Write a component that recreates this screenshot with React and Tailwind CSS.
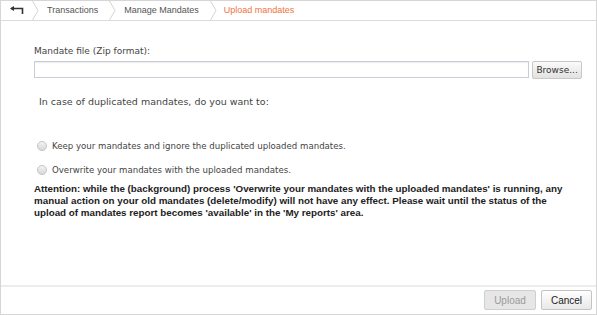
export default function App() {
	const crumbs = ['Transactions', 'Manage Mandates']
	return (
		<div className="w-[597px] h-[315px] bg-white border border-[#d6d6d6] flex flex-col text-[#333]">
			<header className="h-[20px] border-b border-[#dcdcdc] flex items-stretch font-['Liberation_Sans',Arial,sans-serif] text-[9px]">
				<div className="w-[31px] flex items-center justify-center">
					<svg width="14" height="9" viewBox="0 0 14 9" className="ml-[1px]">
						<path d="M1 2.5 H12.5 V8" fill="none" stroke="#333" strokeWidth="1.6" />
						<path d="M0 2.5 L4 0 V5 Z" fill="#333" />
					</svg>
				</div>
				{crumbs.map((c) => (
					<div key={c} className="flex items-stretch">
						<Chevron />
						<span className="flex items-center pl-[8px] pr-[11px] text-[#555]">{c}</span>
					</div>
				))}
				<div className="flex items-stretch">
					<Chevron />
					<span className="flex items-center pl-[7px] text-[#ee7440]">Upload mandates</span>
				</div>
			</header>

			<main className="flex-1 pl-[33px] pr-[14px] font-['DejaVu_Sans',Tahoma,sans-serif] text-[#444]">
				<div className="mt-[24px] text-[9px] leading-[12px]">Mandate file (Zip format):</div>
				<div className="mt-[4px] flex gap-[3px]">
					<div className="w-[497px] h-[17px] border border-[#c9ced6] bg-white shadow-[inset_0_1px_1px_rgba(0,0,0,0.08)]" />
					<button className="w-[50px] h-[18px] border border-[#c8c8c8] rounded-[2px] bg-gradient-to-b from-[#fafafa] to-[#e2e2e2] text-[9px] text-[#333] leading-none">
						Browse...
					</button>
				</div>
				<div className="mt-[17px] pl-[5px] text-[9.5px] leading-[12px]">In case of duplicated mandates, do you want to:</div>
				<div className="mt-[32px] flex flex-col gap-[12px] text-[8.6px]">
					<Radio label="Keep your mandates and ignore the duplicated uploaded mandates." />
					<Radio label="Overwrite your mandates with the uploaded mandates." />
				</div>
				<p className="mt-[7px] whitespace-nowrap font-['Liberation_Sans',Arial,sans-serif] font-bold text-[9.8px] leading-[12px] text-[#222]">
					Attention: while the (background) process 'Overwrite your mandates with the uploaded mandates' is running, any<br />
					manual action on your old mandates (delete/modify) will not have any effect. Please wait until the status of the<br />
					upload of mandates report becomes 'available' in the 'My reports' area.
				</p>
			</main>

			<footer className="h-[29px] border-t-2 border-[#ececec] flex items-start justify-end gap-[5px] pt-[3px] pr-[4px] font-['Liberation_Sans',Arial,sans-serif] text-[10px]">
				<button className="w-[52px] h-[20px] border border-[#cfcfcf] rounded-[2px] bg-[#e6e6e6] text-[#9a9a9a]">Upload</button>
				<button className="w-[51px] h-[20px] border border-[#c4c4c4] rounded-[2px] bg-gradient-to-b from-white to-[#e8e8e8] text-[#222]">Cancel</button>
			</footer>
		</div>
	)
}

function Chevron() {
	return (
		<svg width="7" height="19" viewBox="0 0 7 19" className="shrink-0">
			<path d="M0.5 0 L6 9.5 L0.5 19" fill="none" stroke="#d4d4d4" strokeWidth="1" />
		</svg>
	)
}

function Radio({ label }) {
	return (
		<label className="flex items-center gap-[5px] leading-[12px]">
			<span className="ml-[3px] w-[10px] h-[10px] rounded-full border border-[#c2c2c2] bg-gradient-to-b from-[#f4f4f4] to-[#d8d8d8]" />
			<span>{label}</span>
		</label>
	)
}
